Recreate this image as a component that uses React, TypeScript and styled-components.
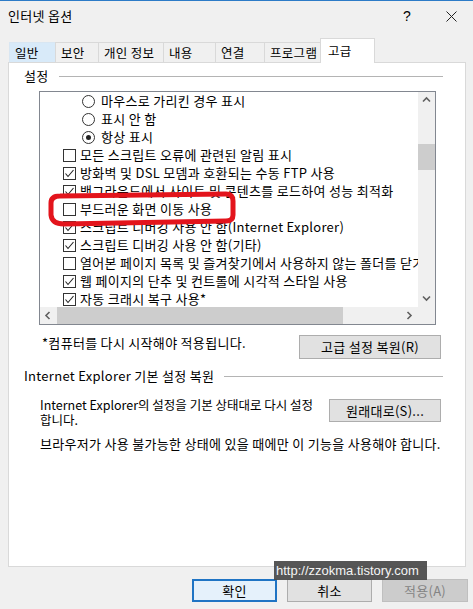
import styled, { createGlobalStyle } from 'styled-components';

const GlobalStyle = createGlobalStyle`
  html, body {
    margin: 0;
    padding: 0;
    background: #f0f0f0;
  }
  body {
    font-family: "Noto Sans CJK KR", "Noto Sans", sans-serif;
    font-size: 13px;
    letter-spacing: 0.3px;
    color: #000;
  }
`;

const Dialog = styled.div`
  position: relative;
  width: 473px;
  height: 609px;
  box-sizing: border-box;
  border-top: 1px solid #2c7bc7;
  background: #f0f0f0;
  display: flex;
  flex-direction: column;
  overflow: hidden;
`;

const TitleBar = styled.div`
  height: 30px;
  display: flex;
  align-items: center;
  padding-left: 8px;
`;

const Title = styled.div`
  line-height: 16px;
  flex: 1;
`;

const TitleButton = styled.div<{ $w: number }>`
  width: ${p => p.$w}px;
  height: 30px;
  display: flex;
  align-items: center;
  justify-content: center;
  font-family: "Liberation Sans", sans-serif;
  font-size: 14px;
`;

const TabStrip = styled.div`
  margin-top: 8px;
  height: 24px;
  display: flex;
  align-items: flex-end;
  padding-left: 9px;
  margin-bottom: -1px;
`;

const Tab = styled.div<{ $w: number; $active?: boolean; $hover?: boolean }>`
  box-sizing: border-box;
  width: ${p => p.$w}px;
  height: ${p => (p.$active ? 25 : 21)}px;
  padding-left: ${p => (p.$active ? 7 : 5)}px;
  margin-left: ${p => (p.$active ? -2 : -1)}px;
  margin-right: ${p => (p.$active ? -2 : 0)}px;
  border: 1px solid ${p => (p.$hover ? '#d8e6f2' : '#d9d9d9')};
  border-bottom: ${p => (p.$active ? 'none' : '1px solid #d9d9d9')};
  background: ${p => (p.$active ? '#fff' : p.$hover ? '#d8eaf9' : '#f0f0f0')};
  display: flex;
  align-items: center;
  font-size: 12.5px;
  line-height: 16px;
  white-space: nowrap;
  position: relative;
  z-index: ${p => (p.$active ? 1 : 0)};
  &:first-child {
    margin-left: 0;
  }
`;

const Panel = styled.div`
  box-sizing: border-box;
  margin: 0 7px 0 8px;
  height: 505px;
  background: #fff;
  border: 1px solid #d9d9d9;
  display: flex;
  flex-direction: column;
`;

const GroupHeader = styled.div<{ $top: number }>`
  display: flex;
  align-items: center;
  margin-top: ${p => p.$top}px;
  padding: 0 22px 0 15px;
  line-height: 16px;
  white-space: nowrap;
  &::after {
    content: '';
    flex: 1;
    height: 1px;
    margin-left: 10px;
    background: #b4b4b4;
  }
`;

const ListBox = styled.div`
  box-sizing: border-box;
  margin: 7px 0 0 30px;
  width: 397px;
  height: 234px;
  border: 1px solid #828790;
  display: grid;
  grid-template-columns: 1fr 17px;
  grid-template-rows: 1fr 17px;
`;

const ListContent = styled.div`
  overflow: hidden;
  display: flex;
  flex-direction: column;
`;

const Row = styled.div<{ $indent: number }>`
  height: 18px;
  flex-shrink: 0;
  display: flex;
  align-items: center;
  gap: 4px;
  padding-left: ${p => p.$indent}px;
  white-space: nowrap;
  line-height: 16px;
`;

const Box = styled.div`
  box-sizing: border-box;
  width: 13px;
  height: 13px;
  flex-shrink: 0;
  border: 1px solid #333;
  background: #fff;
  display: flex;
  align-items: center;
  justify-content: center;
`;

const Circle = styled(Box)`
  border-radius: 50%;
  margin-right: 2px;
`;

const Dot = styled.div`
  width: 5px;
  height: 5px;
  border-radius: 50%;
  background: #222;
`;

const VScroll = styled.div`
  background: #f0f0f0;
  display: flex;
  flex-direction: column;
`;

const HScroll = styled.div`
  background: #f0f0f0;
  display: flex;
`;

const Corner = styled.div`
  background: #f0f0f0;
`;

const Arrow = styled.div`
  width: 17px;
  height: 17px;
  flex-shrink: 0;
  display: flex;
  align-items: center;
  justify-content: center;
`;

const Track = styled.div`
  flex: 1;
  display: flex;
`;

const VThumb = styled.div<{ $offset: number; $size: number }>`
  margin-top: ${p => p.$offset}px;
  height: ${p => p.$size}px;
  width: 17px;
  background: #cdcdcd;
`;

const HThumb = styled.div<{ $size: number }>`
  width: ${p => p.$size}px;
  height: 17px;
  background: #cdcdcd;
`;

const ActionRow = styled.div<{ $top: number }>`
  display: flex;
  align-items: flex-start;
  margin-top: ${p => p.$top}px;
  padding-right: 24px;
`;

const Note = styled.div`
  padding-left: 33px;
  line-height: 16px;
  white-space: nowrap;
`;

const Description = styled.div`
  flex: 1;
  min-width: 0;
  padding-left: 31px;
  display: flex;
  flex-direction: column;
`;

const DescLine = styled.div`
  height: 15px;
  font-size: 12.5px;
  line-height: 15px;
  letter-spacing: 0;
  white-space: nowrap;
`;

const Button = styled.div<{ $w: number; $h?: number; $top?: number; $primary?: boolean; $disabled?: boolean }>`
  box-sizing: border-box;
  width: ${p => p.$w}px;
  height: ${p => p.$h ?? 24}px;
  margin-top: ${p => p.$top ?? 0}px;
  margin-left: auto;
  flex-shrink: 0;
  display: flex;
  align-items: center;
  justify-content: center;
  background: ${p => (p.$primary ? '#e5f1fb' : p.$disabled ? '#cccccc' : '#e1e1e1')};
  border: ${p => (p.$primary ? '2px solid #1f74c4' : p.$disabled ? '1px solid #bfbfbf' : '1px solid #adadad')};
  color: ${p => (p.$disabled ? '#838383' : '#000')};
  line-height: 16px;
  white-space: nowrap;
`;

const Warning = styled.div`
  margin-top: 9px;
  padding-left: 31px;
  line-height: 16px;
  white-space: nowrap;
`;

const Footer = styled.div`
  margin-top: 12px;
  display: flex;
  justify-content: flex-end;
  gap: 10px;
  padding-right: 5px;
  & > div {
    margin-left: 0;
  }
`;

const Watermark = styled.div`
  position: absolute;
  left: 274px;
  top: 560px;
  width: 153px;
  height: 19px;
  box-sizing: border-box;
  padding-left: 2px;
  background: rgba(72, 72, 72, 0.92);
  color: #f4f4f4;
  font-family: "Liberation Sans", sans-serif;
  font-size: 13px;
  letter-spacing: 0;
  line-height: 19px;
  white-space: nowrap;
`;

const Annotation = styled.svg`
  position: absolute;
  left: 0;
  top: 0;
  pointer-events: none;
`;

const Check = () => (
  <svg width="11" height="11" viewBox="0 0 11 11">
    <polyline points="1.5,5.5 4,8.5 9.5,2" fill="none" stroke="#222" strokeWidth="1.1" />
  </svg>
);

const Chevron = ({ dir }: { dir: 'up' | 'down' | 'left' | 'right' }) => {
  const pts = {
    up: '1,5.5 4.5,2 8,5.5',
    down: '1,2.5 4.5,6 8,2.5',
    left: '5.5,1 2,4.5 5.5,8',
    right: '2.5,1 6,4.5 2.5,8',
  }[dir];
  return (
    <svg width="9" height="9" viewBox="0 0 9 9">
      <polyline points={pts} fill="none" stroke="#606060" strokeWidth="1.6" />
    </svg>
  );
};

type Item = { kind: 'radio' | 'check'; label: string; on: boolean };

const items: Item[] = [
  { kind: 'radio', label: '마우스로 가리킨 경우 표시', on: false },
  { kind: 'radio', label: '표시 안 함', on: false },
  { kind: 'radio', label: '항상 표시', on: true },
  { kind: 'check', label: '모든 스크립트 오류에 관련된 알림 표시', on: false },
  { kind: 'check', label: '방화벽 및 DSL 모뎀과 호환되는 수동 FTP 사용', on: true },
  { kind: 'check', label: '백그라운드에서 사이트 및 콘텐츠를 로드하여 성능 최적화', on: true },
  { kind: 'check', label: '부드러운 화면 이동 사용', on: false },
  { kind: 'check', label: '스크립트 디버깅 사용 안 함(Internet Explorer)', on: true },
  { kind: 'check', label: '스크립트 디버깅 사용 안 함(기타)', on: true },
  { kind: 'check', label: '열어본 페이지 목록 및 즐겨찾기에서 사용하지 않는 폴더를 닫기', on: false },
  { kind: 'check', label: '웹 페이지의 단추 및 컨트롤에 시각적 스타일 사용', on: true },
  { kind: 'check', label: '자동 크래시 복구 사용*', on: true },
];

const tabs = [
  { label: '일반', w: 47, hover: true },
  { label: '보안', w: 44 },
  { label: '개인 정보', w: 66 },
  { label: '내용', w: 53 },
  { label: '연결', w: 50 },
  { label: '프로그램', w: 58 },
  { label: '고급', w: 55, active: true },
];

const App = () => (
  <>
    <GlobalStyle />
    <Dialog>
      <TitleBar>
        <Title>인터넷 옵션</Title>
        <TitleButton $w={46}>?</TitleButton>
        <TitleButton $w={43}>
          <svg width="11" height="11" viewBox="0 0 11 11">
            <path d="M0.5 0.5 L10.5 10.5 M10.5 0.5 L0.5 10.5" stroke="#222" strokeWidth="1" />
          </svg>
        </TitleButton>
      </TitleBar>

      <TabStrip>
        {tabs.map(t => (
          <Tab key={t.label} $w={t.w} $active={t.active} $hover={t.hover}>
            {t.label}
          </Tab>
        ))}
      </TabStrip>

      <Panel>
        <GroupHeader $top={5}>설정</GroupHeader>
        <ListBox>
          <ListContent>
            {items.map(it => (
              <Row key={it.label} $indent={it.kind === 'radio' ? 42 : 23}>
                {it.kind === 'radio' ? (
                  <Circle>{it.on && <Dot />}</Circle>
                ) : (
                  <Box>{it.on && <Check />}</Box>
                )}
                {it.label}
              </Row>
            ))}
          </ListContent>
          <VScroll>
            <Arrow><Chevron dir="up" /></Arrow>
            <Track><VThumb $offset={35} $size={26} /></Track>
            <Arrow><Chevron dir="down" /></Arrow>
          </VScroll>
          <HScroll>
            <Arrow><Chevron dir="left" /></Arrow>
            <Track><HThumb $size={286} /></Track>
            <Arrow><Chevron dir="right" /></Arrow>
          </HScroll>
          <Corner />
        </ListBox>

        <ActionRow $top={10}>
          <Note>*컴퓨터를 다시 시작해야 적용됩니다.</Note>
          <Button $w={142}>고급 설정 복원(R)</Button>
        </ActionRow>

        <GroupHeader $top={9}>Internet Explorer 기본 설정 복원</GroupHeader>

        <ActionRow $top={13}>
          <Description>
            <DescLine>Internet Explorer의 설정을 기본 상태대로 다시 설정</DescLine>
            <DescLine>합니다.</DescLine>
          </Description>
          <Button $w={112} $h={23} $top={2}>원래대로(S)...</Button>
        </ActionRow>

        <Warning>브라우저가 사용 불가능한 상태에 있을 때에만 이 기능을 사용해야 합니다.</Warning>
      </Panel>

      <Footer>
        <Button $w={85} $h={23} $primary>확인</Button>
        <Button $w={85} $h={23}>취소</Button>
        <Button $w={86} $h={23} $disabled>적용(A)</Button>
      </Footer>

      <Watermark>http://zzokma.tistory.com</Watermark>

      <Annotation width="473" height="609" viewBox="0 0 473 609">
        <path
          d="M60 195 L226 193 Q233 193 233 200 L233 214 Q233 220 226 220 L64 223 Q52 223 51 214 L51 202 Q51 195 60 195"
          fill="none"
          stroke="#e3141c"
          strokeWidth="5"
          strokeLinejoin="round"
        />
      </Annotation>
    </Dialog>
  </>
);

export default App;
